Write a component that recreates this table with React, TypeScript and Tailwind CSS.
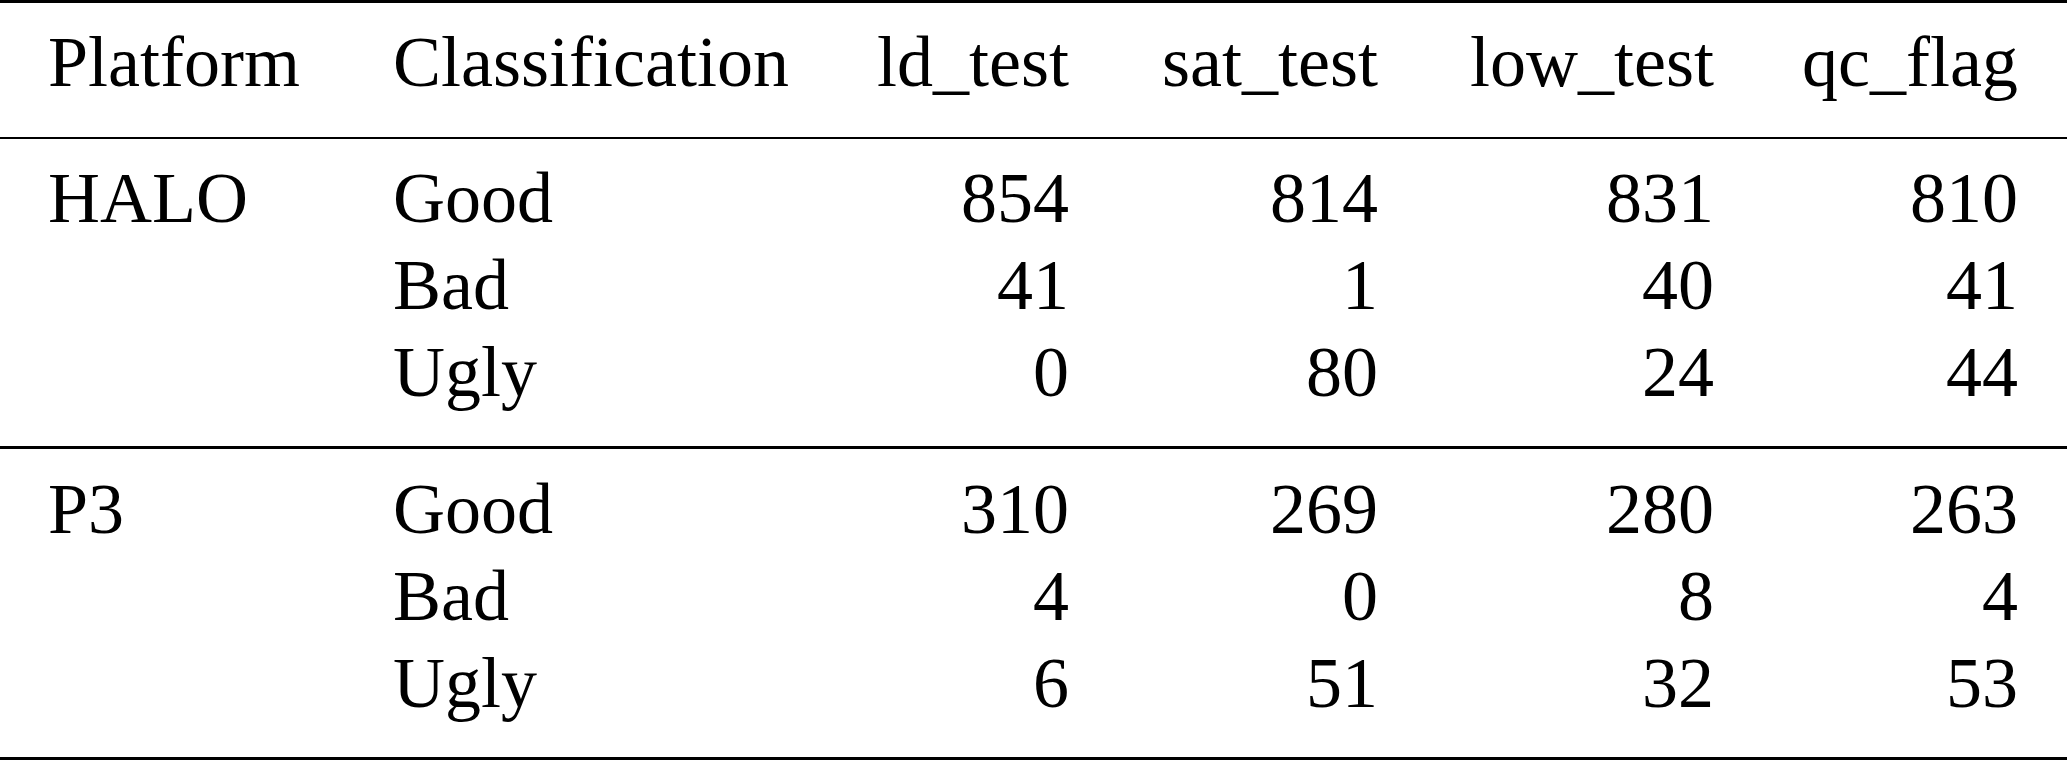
const columns = ["Platform", "Classification", "ld_test", "sat_test", "low_test", "qc_flag"];

const groups = [
  {
    platform: "HALO",
    rows: [
      { label: "Good", values: [854, 814, 831, 810] },
      { label: "Bad", values: [41, 1, 40, 41] },
      { label: "Ugly", values: [0, 80, 24, 44] },
    ],
  },
  {
    platform: "P3",
    rows: [
      { label: "Good", values: [310, 269, 280, 263] },
      { label: "Bad", values: [4, 0, 8, 4] },
      { label: "Ugly", values: [6, 51, 32, 53] },
    ],
  },
];

const grid = "grid grid-cols-[345px_400px_276px_309px_336px_304px] pl-[48px] pr-[49px]";

export default function App() {
  return (
    <div className="min-h-screen w-[2067px] bg-white font-['Liberation_Serif','Times_New_Roman',serif] text-[72px] leading-[87px] text-black">
      <div className="border-t-[3px] border-b-2 border-black pt-4 pb-[31px]">
        <div className={grid}>
          {columns.map((col, i) => (
            <div key={col} className={i < 2 ? "whitespace-nowrap text-left" : "whitespace-nowrap text-right"}>
              {col}
            </div>
          ))}
        </div>
      </div>
      {groups.map((group, gi) => (
        <div
          key={group.platform}
          className={gi === 0 ? "border-b-[3px] border-black pt-4 pb-[30px]" : "border-b-[3px] border-black pt-[17px] pb-[30px]"}
        >
          {group.rows.map((row, ri) => (
            <div key={row.label} className={grid}>
              <div className="whitespace-nowrap">{ri === 0 ? group.platform : ""}</div>
              <div className="whitespace-nowrap">{row.label}</div>
              {row.values.map((v, vi) => (
                <div key={vi} className="text-right">
                  {v}
                </div>
              ))}
            </div>
          ))}
        </div>
      ))}
    </div>
  );
}
